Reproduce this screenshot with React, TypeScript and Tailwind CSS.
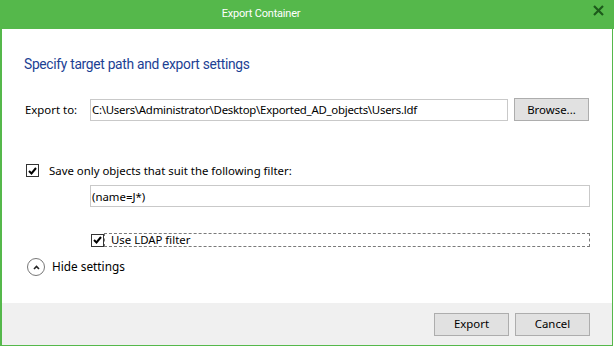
import React from 'react';

function Check() {
  return (
    <svg width="9" height="8" viewBox="0 0 9 8" className="block">
      <path d="M1 4 L3.5 6.5 L8 1" fill="none" stroke="#000" strokeWidth="2" />
    </svg>
  );
}

function CheckBox() {
  return (
    <span className="flex items-center justify-center w-[13px] h-[13px] border border-[#333] bg-white">
      <Check />
    </span>
  );
}

export default function App() {
  return (
    <div className="w-[614px] h-[346px] bg-white text-[11.4px] text-black font-['Noto_Sans',sans-serif]">
      <div className="w-[613px] h-[346px] flex flex-col border-l-2 border-r border-b border-[#55b84b]">
        <div className="h-[29px] -ml-[2px] w-[614px] bg-[#55b84b] relative flex items-center justify-center pr-[92px] text-white text-[11px] font-['Roboto',sans-serif] tracking-[-0.2px]">
          Export Container
          <svg className="absolute right-[10px] top-[5px]" width="11" height="11" viewBox="0 0 11 11">
            <path d="M1 1 L10 10 M10 1 L1 10" stroke="#1d5a1b" strokeWidth="2.2" />
          </svg>
        </div>

        <div className="flex-1 flex flex-col pl-[23px] pr-[22px]">
          <h1 className="mt-[25px] -ml-[1px] text-[13.8px] leading-[20px] text-[#1c3f94] font-['Roboto',sans-serif] tracking-[-0.3px]">
            Specify target path and export settings
          </h1>

          <div className="mt-[24px] flex items-center h-[23px]">
            <span className="w-[65px]">Export to:</span>
            <div className="w-[418px] h-[22px] border border-[#c9c9c9] flex items-center px-[1px] tracking-[-0.25px]">
              C:\Users\Administrator\Desktop\Exported_AD_objects\Users.ldf
            </div>
            <button className="ml-[6px] w-[75px] h-[23px] bg-[#e1e1e1] border border-[#adadad]">
              Browse...
            </button>
          </div>

          <div className="mt-[41px] flex items-center gap-[10px] ml-[1px]">
            <CheckBox />
            <span>Save only objects that suit the following filter:</span>
          </div>

          <div className="mt-[6px] ml-[65px] w-[500px] h-[22px] border border-[#c9c9c9] flex items-center px-[1px]">
            (name=J*)
          </div>

          <div className="mt-[26px] ml-[66px] flex items-center">
            <CheckBox />
            <span className="flex-1 h-[14px] border border-dashed border-[#7a7a7a] flex items-center pl-[6px] leading-none">
              Use LDAP filter
            </span>
          </div>

          <div className="mt-[11px] flex items-center gap-[7px] ml-[2px]">
            <span className="shrink-0 w-[18px] h-[18px] rounded-full border border-[#777] flex items-center justify-center">
              <svg width="7" height="5" viewBox="0 0 7 5">
                <path d="M1 4 L3.5 1.5 L6 4" fill="none" stroke="#222" strokeWidth="1.6" />
              </svg>
            </span>
            <span className="text-[11.8px]">Hide settings</span>
          </div>
        </div>

        <div className="h-[42px] bg-[#f0f0f0] flex items-center justify-end gap-[6px] pr-[22px]">
          <button className="w-[75px] h-[23px] bg-[#e1e1e1] border border-[#adadad]">Export</button>
          <button className="w-[75px] h-[23px] bg-[#e1e1e1] border border-[#adadad]">Cancel</button>
        </div>
      </div>
    </div>
  );
}
